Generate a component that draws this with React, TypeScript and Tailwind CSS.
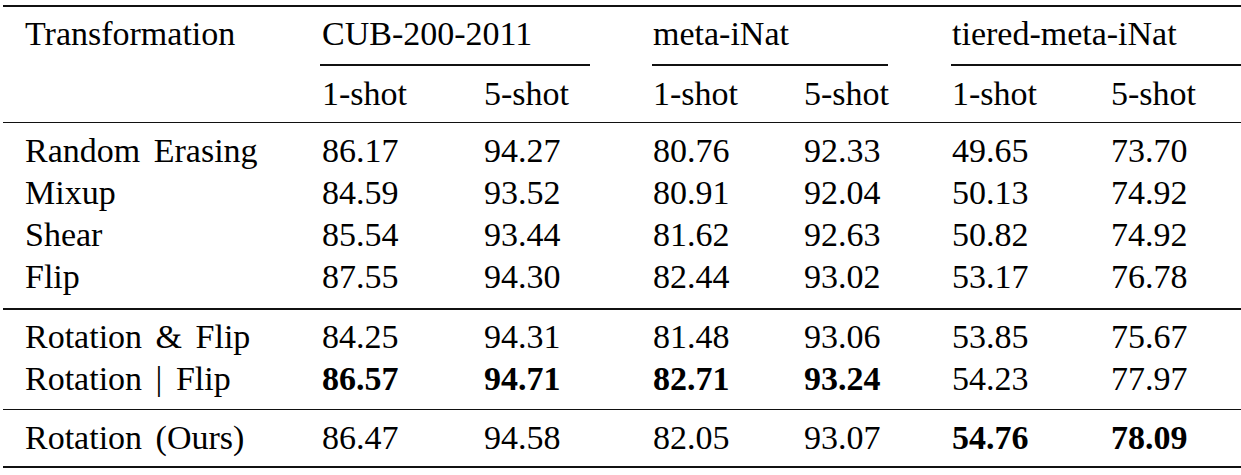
import React from "react";

type Row = { name: string; vals: string[]; bold?: number[] };

const groups: Row[][] = [
	[
		{ name: "Random Erasing", vals: ["86.17", "94.27", "80.76", "92.33", "49.65", "73.70"] },
		{ name: "Mixup", vals: ["84.59", "93.52", "80.91", "92.04", "50.13", "74.92"] },
		{ name: "Shear", vals: ["85.54", "93.44", "81.62", "92.63", "50.82", "74.92"] },
		{ name: "Flip", vals: ["87.55", "94.30", "82.44", "93.02", "53.17", "76.78"] },
	],
	[
		{ name: "Rotation & Flip", vals: ["84.25", "94.31", "81.48", "93.06", "53.85", "75.67"] },
		{ name: "Rotation | Flip", vals: ["86.57", "94.71", "82.71", "93.24", "54.23", "77.97"], bold: [0, 1, 2, 3] },
	],
	[
		{ name: "Rotation (Ours)", vals: ["86.47", "94.58", "82.05", "93.07", "54.76", "78.09"], bold: [4, 5] },
	],
];

const cols = "grid grid-cols-[297px_162px_169px_151px_148px_159px_1fr] pl-[22px]";

function DataRow({ row }: { row: Row }) {
	return (
		<div className={`${cols} h-[42px] items-center leading-[42px]`}>
			<span className="[word-spacing:5px] whitespace-nowrap">{row.name}</span>
			{row.vals.map((v, i) => (
				<span key={i} className={row.bold?.includes(i) ? "font-bold" : ""}>
					{v}
				</span>
			))}
		</div>
	);
}

export default function App() {
	return (
		<div className="w-[1241px] h-[475px] bg-white text-black overflow-hidden pt-[5px] pl-[3px] font-['Liberation_Serif',serif] text-[34px]">
			<div className="h-[2px] bg-[#111]" />
			<div className={`${cols} h-[57px] items-center leading-[42px] pb-[3px]`}>
				<span>Transformation</span>
				<span className="col-span-2">CUB-200-2011</span>
				<span className="col-span-2">meta-iNat</span>
				<span className="col-span-2">tiered-meta-iNat</span>
			</div>
			<div className="flex h-[1.5px]">
				<div className="w-[317px]" />
				<div className="w-[270px] bg-[#111]" />
				<div className="w-[62px]" />
				<div className="w-[236px] bg-[#111]" />
				<div className="w-[63px]" />
				<div className="flex-1 bg-[#111]" />
			</div>
			<div className={`${cols} h-[56px] items-center leading-[42px]`}>
				<span />
				<span>1-shot</span>
				<span>5-shot</span>
				<span>1-shot</span>
				<span>5-shot</span>
				<span>1-shot</span>
				<span>5-shot</span>
			</div>
			{groups.map((g, gi) => (
				<div key={gi}>
					<div className="h-[1.5px] bg-[#111]" />
					<div className={gi === 0 ? "pt-[7px] pb-[10px]" : gi === 1 ? "pt-[6px] pb-[9px]" : "pt-[7px] pb-[7px]"}>
						{g.map((r) => (
							<DataRow key={r.name} row={r} />
						))}
					</div>
				</div>
			))}
			<div className="h-[2px] bg-[#111]" />
		</div>
	);
}
